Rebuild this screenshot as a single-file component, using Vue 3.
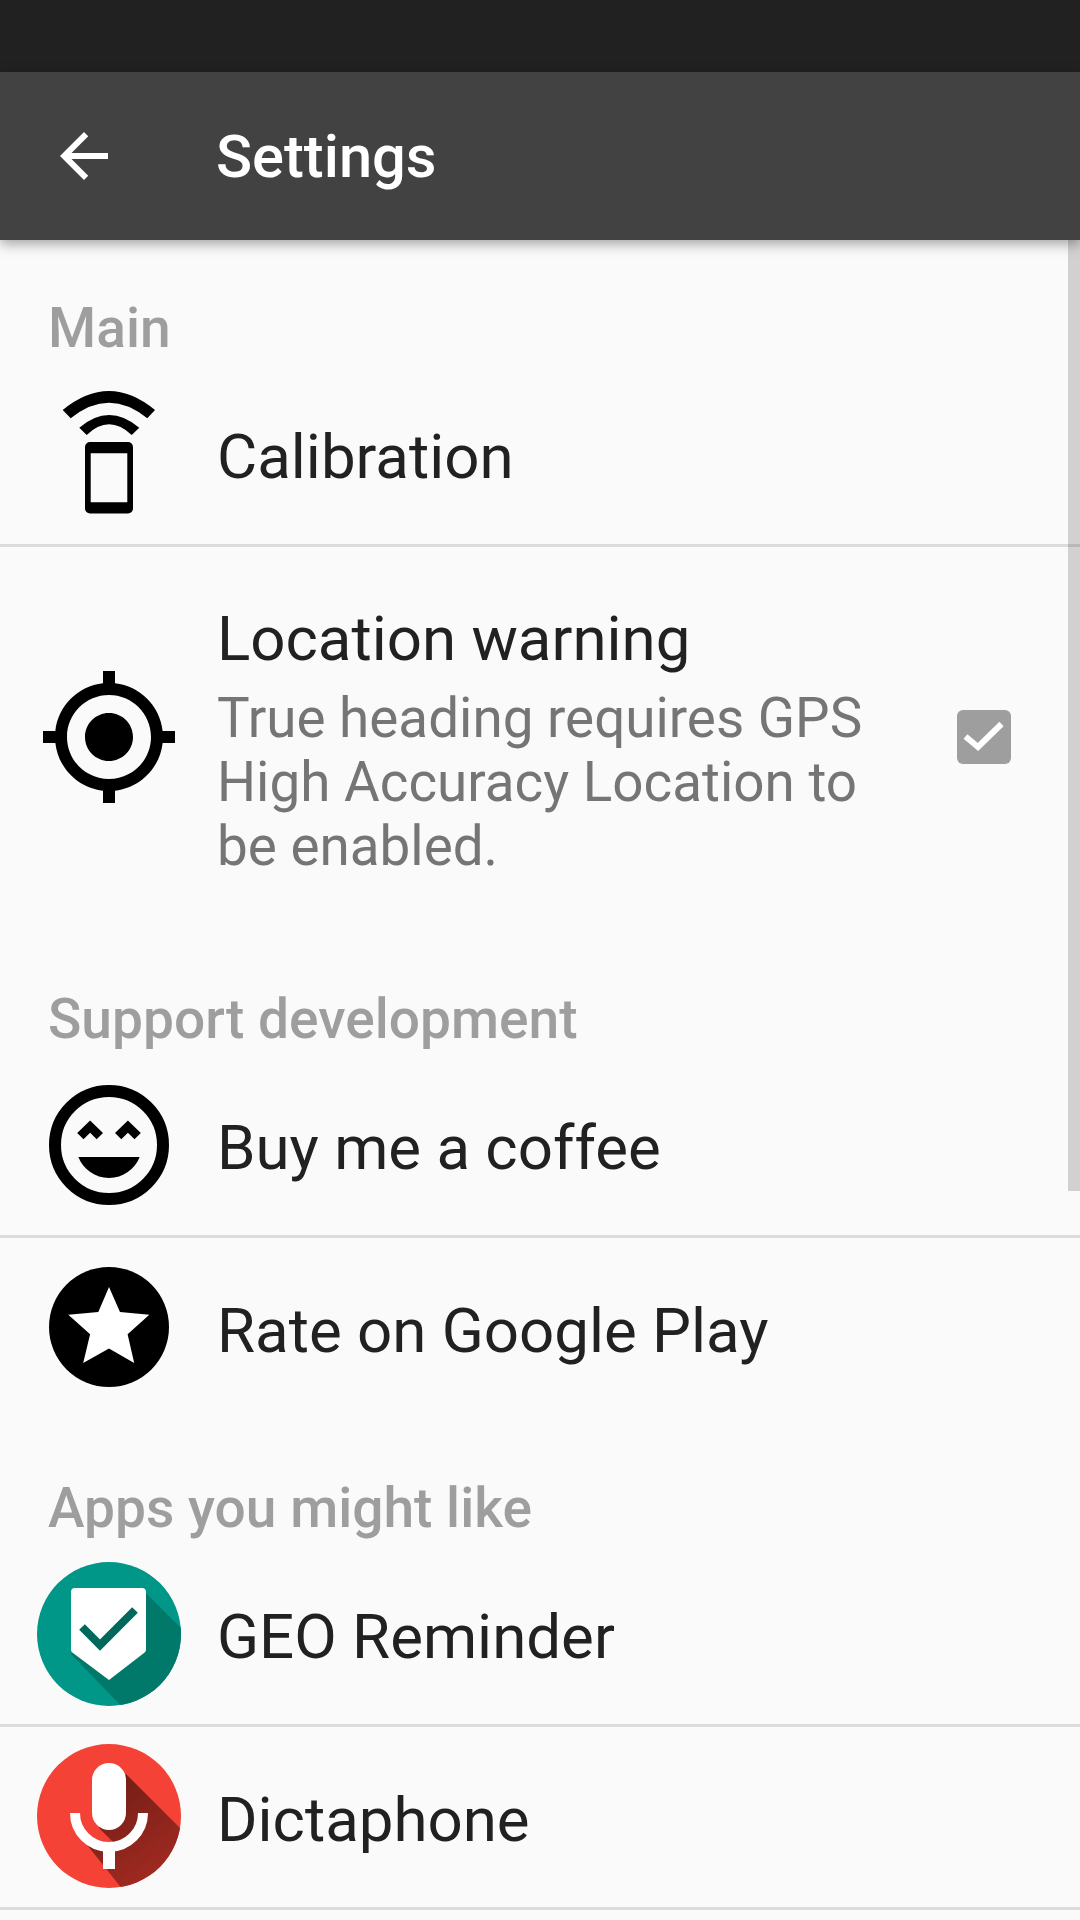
<template>
  <div class="screen">
    <div class="status-bar"></div>
    <header class="app-bar">
      <div class="back">
        <svg width="72" height="72" viewBox="0 0 24 24"><path fill="#fff" d="M20 11H7.83l5.59-5.59L12 4l-8 8 8 8 1.41-1.41L7.83 13H20v-2z" /></svg>
      </div>
      <h1 class="title">Settings</h1>
    </header>

    <main class="list">
      <div class="scrollbar"></div>

      <h2 class="category">Main</h2>
      <div class="row">
        <div class="icon-slot">
          <svg width="144" height="144" viewBox="0 0 144 144">
            <path d="M25.7 28Q72-10 118 28L110.3 36.3Q72 5.1 33.7 36.3Z" />
            <path d="M42.3 45.7Q72 20.3 102.3 45.7L94.7 53Q72 31.6 49.7 53Z" />
            <path fill-rule="evenodd" d="M53 60H91a5 5 0 0 1 5 5V126.500a5 5 0 0 1-5 5H53a5 5 0 0 1-5-5V65a5 5 0 0 1 5-5zM53.700 71.300V120.300H90.300V71.300Z" />
          </svg>
        </div>
        <div class="label">Calibration</div>
      </div>
      <div class="divider"></div>

      <div class="row row-tall">
        <div class="icon-slot">
          <svg width="144" height="144" viewBox="0 0 24 24"><path d="M12 8c-2.21 0-4 1.79-4 4s1.79 4 4 4 4-1.79 4-4-1.79-4-4-4zm8.94 3c-.46-4.17-3.77-7.48-7.94-7.94V1h-2v2.06C6.83 3.52 3.52 6.83 3.06 11H1v2h2.06c.46 4.17 3.77 7.48 7.94 7.94V23h2v-2.06c4.17-.46 7.48-3.77 7.94-7.94H23v-2h-2.06zM12 19c-3.87 0-7-3.13-7-7s3.13-7 7-7 7 3.13 7 7-3.13 7-7 7z" /></svg>
        </div>
        <div class="text-block">
          <div class="label">Location warning</div>
          <div class="summary">True heading requires GPS High Accuracy Location to be enabled.</div>
        </div>
        <div class="checkbox">
          <svg width="54" height="54" viewBox="0 0 54 54"><path d="M8.500 26.500L21 37 44.500 14" fill="none" stroke="#fff" stroke-width="6" /></svg>
        </div>
      </div>

      <h2 class="category">Support development</h2>
      <div class="row">
        <div class="icon-slot">
          <svg width="144" height="144" viewBox="0 0 24 24">
            <circle cx="12" cy="12" r="9" fill="none" stroke="#000" stroke-width="2" />
            <path d="M12 17.5c2.33 0 4.3-1.46 5.11-3.5H6.89c.81 2.04 2.78 3.5 5.11 3.5z" />
            <path d="M8.85 7.9L6.7 10l1.05 1.05 1.1-1.1 1.1 1.1L11 10zM15.15 7.9L13 10l1.05 1.05 1.1-1.1 1.1 1.1L17.3 10z" />
          </svg>
        </div>
        <div class="label">Buy me a coffee</div>
      </div>
      <div class="divider"></div>
      <div class="row">
        <div class="icon-slot">
          <svg width="144" height="144" viewBox="0 0 24 24">
            <circle cx="12" cy="12" r="10" />
            <path fill="#fff" d="M12 5.33L13.83 9.5 18.72 9.95 15.1 13.2 16.2 18 12 15.6 7.7 18 8.85 13.2 5.22 9.95 10.22 9.5z" />
          </svg>
        </div>
        <div class="label">Rate on Google Play</div>
      </div>

      <h2 class="category">Apps you might like</h2>
      <div class="row">
        <div class="icon-slot">
          <svg width="144" height="144" viewBox="0 0 144 144">
            <clipPath id="geo-clip"><circle cx="72" cy="72" r="72" /></clipPath>
            <circle cx="72" cy="72" r="72" fill="#009688" />
            <path clip-path="url(#geo-clip)" d="M105 27L150 72V150H90L34 92z" fill="#00796b" />
            <path d="M38 26H105a4 4 0 0 1 4 4V88a4 4 0 0 1-2 3L72 118 36 91a4 4 0 0 1-2-3V30a4 4 0 0 1 4-4z" fill="#fff" />
            <path d="M45 65L63 83 98 48" fill="none" stroke="#00695c" stroke-width="8" />
          </svg>
        </div>
        <div class="label">GEO Reminder</div>
      </div>
      <div class="divider"></div>
      <div class="row">
        <div class="icon-slot">
          <svg width="144" height="144" viewBox="0 0 144 144">
            <defs>
              <clipPath id="mic-clip"><circle cx="72" cy="72" r="72" /></clipPath>
              <linearGradient id="mic-shadow" x1="0.2" y1="0" x2="0.8" y2="1">
                <stop offset="0" stop-color="#6f1c15" />
                <stop offset="1" stop-color="#a62c22" />
              </linearGradient>
            </defs>
            <circle cx="72" cy="72" r="72" fill="#f44336" />
            <path clip-path="url(#mic-clip)" d="M89 30L146 87V146H86L43 92 78 100 62 84V80z" fill="url(#mic-shadow)" />
            <rect x="55" y="19" width="34" height="67" rx="17" fill="#fff" />
            <path d="M38 69a34 34 0 0 0 68 0" fill="none" stroke="#fff" stroke-width="10" />
            <rect x="66" y="100" width="12" height="25" fill="#fff" />
          </svg>
        </div>
        <div class="label">Dictaphone</div>
      </div>
      <div class="divider"></div>
    </main>
  </div>
</template>

<script setup>
</script>

<style>
html, body {
  margin: 0;
  background: #fafafa;
}
</style>

<style scoped>
.screen {
  width: 1080px;
  height: 1920px;
  overflow: hidden;
  background: #fafafa;
  font-family: Roboto, "Noto Sans", sans-serif;
}

.status-bar {
  height: 72px;
  background: #212121;
}

.app-bar {
  height: 168px;
  background: #424242;
  display: flex;
  align-items: center;
  box-shadow: 0 4px 12px rgba(0, 0, 0, 0.35);
  position: relative;
  z-index: 2;
}

.back {
  width: 216px;
  box-sizing: border-box;
  padding-left: 48px;
  flex-shrink: 0;
}

.back svg {
  display: block;
}

.title {
  margin: 0;
  padding-top: 2px;
  font-size: 59.6px;
  font-weight: 500;
  color: #fff;
}

.list {
  position: relative;
}

.scrollbar {
  position: absolute;
  top: 0;
  right: 0;
  width: 12px;
  height: 951px;
  background: rgba(0, 0, 0, 0.16);
}

.category {
  margin: 0;
  height: 126px;
  box-sizing: border-box;
  padding: 59px 0 0 48px;
  font-size: 55.1px;
  line-height: 62px;
  font-weight: 500;
  color: #9e9e9e;
}

.category:first-of-type {
  height: 124px;
  padding-top: 57px;
}

.row {
  height: 180px;
  display: flex;
  align-items: center;
}

.row-tall {
  height: 382px;
  padding-bottom: 3px;
  box-sizing: border-box;
}

.icon-slot {
  width: 218px;
  flex-shrink: 0;
  display: flex;
  justify-content: center;
}

.divider + .row:not(.row-tall) .icon-slot {
  margin-bottom: 2px;
}

.icon-slot svg {
  display: block;
}

.label {
  font-size: 61.8px;
  line-height: 70px;
  color: #212121;
}

.row > .label {
  margin-left: -1px;
  padding-top: 6px;
}

.text-block {
  margin-left: -1px;
  padding-top: 8px;
  width: 680px;
  flex-shrink: 0;
}

.summary {
  margin-top: 12px;
  font-size: 54.8px;
  line-height: 64px;
  color: #757575;
}

.checkbox {
  width: 54px;
  height: 54px;
  margin-left: 60px;
  border-radius: 6px;
  background: #9e9e9e;
}

.checkbox svg {
  display: block;
}

.divider {
  height: 3px;
  background: #dcdcdc;
}
</style>
